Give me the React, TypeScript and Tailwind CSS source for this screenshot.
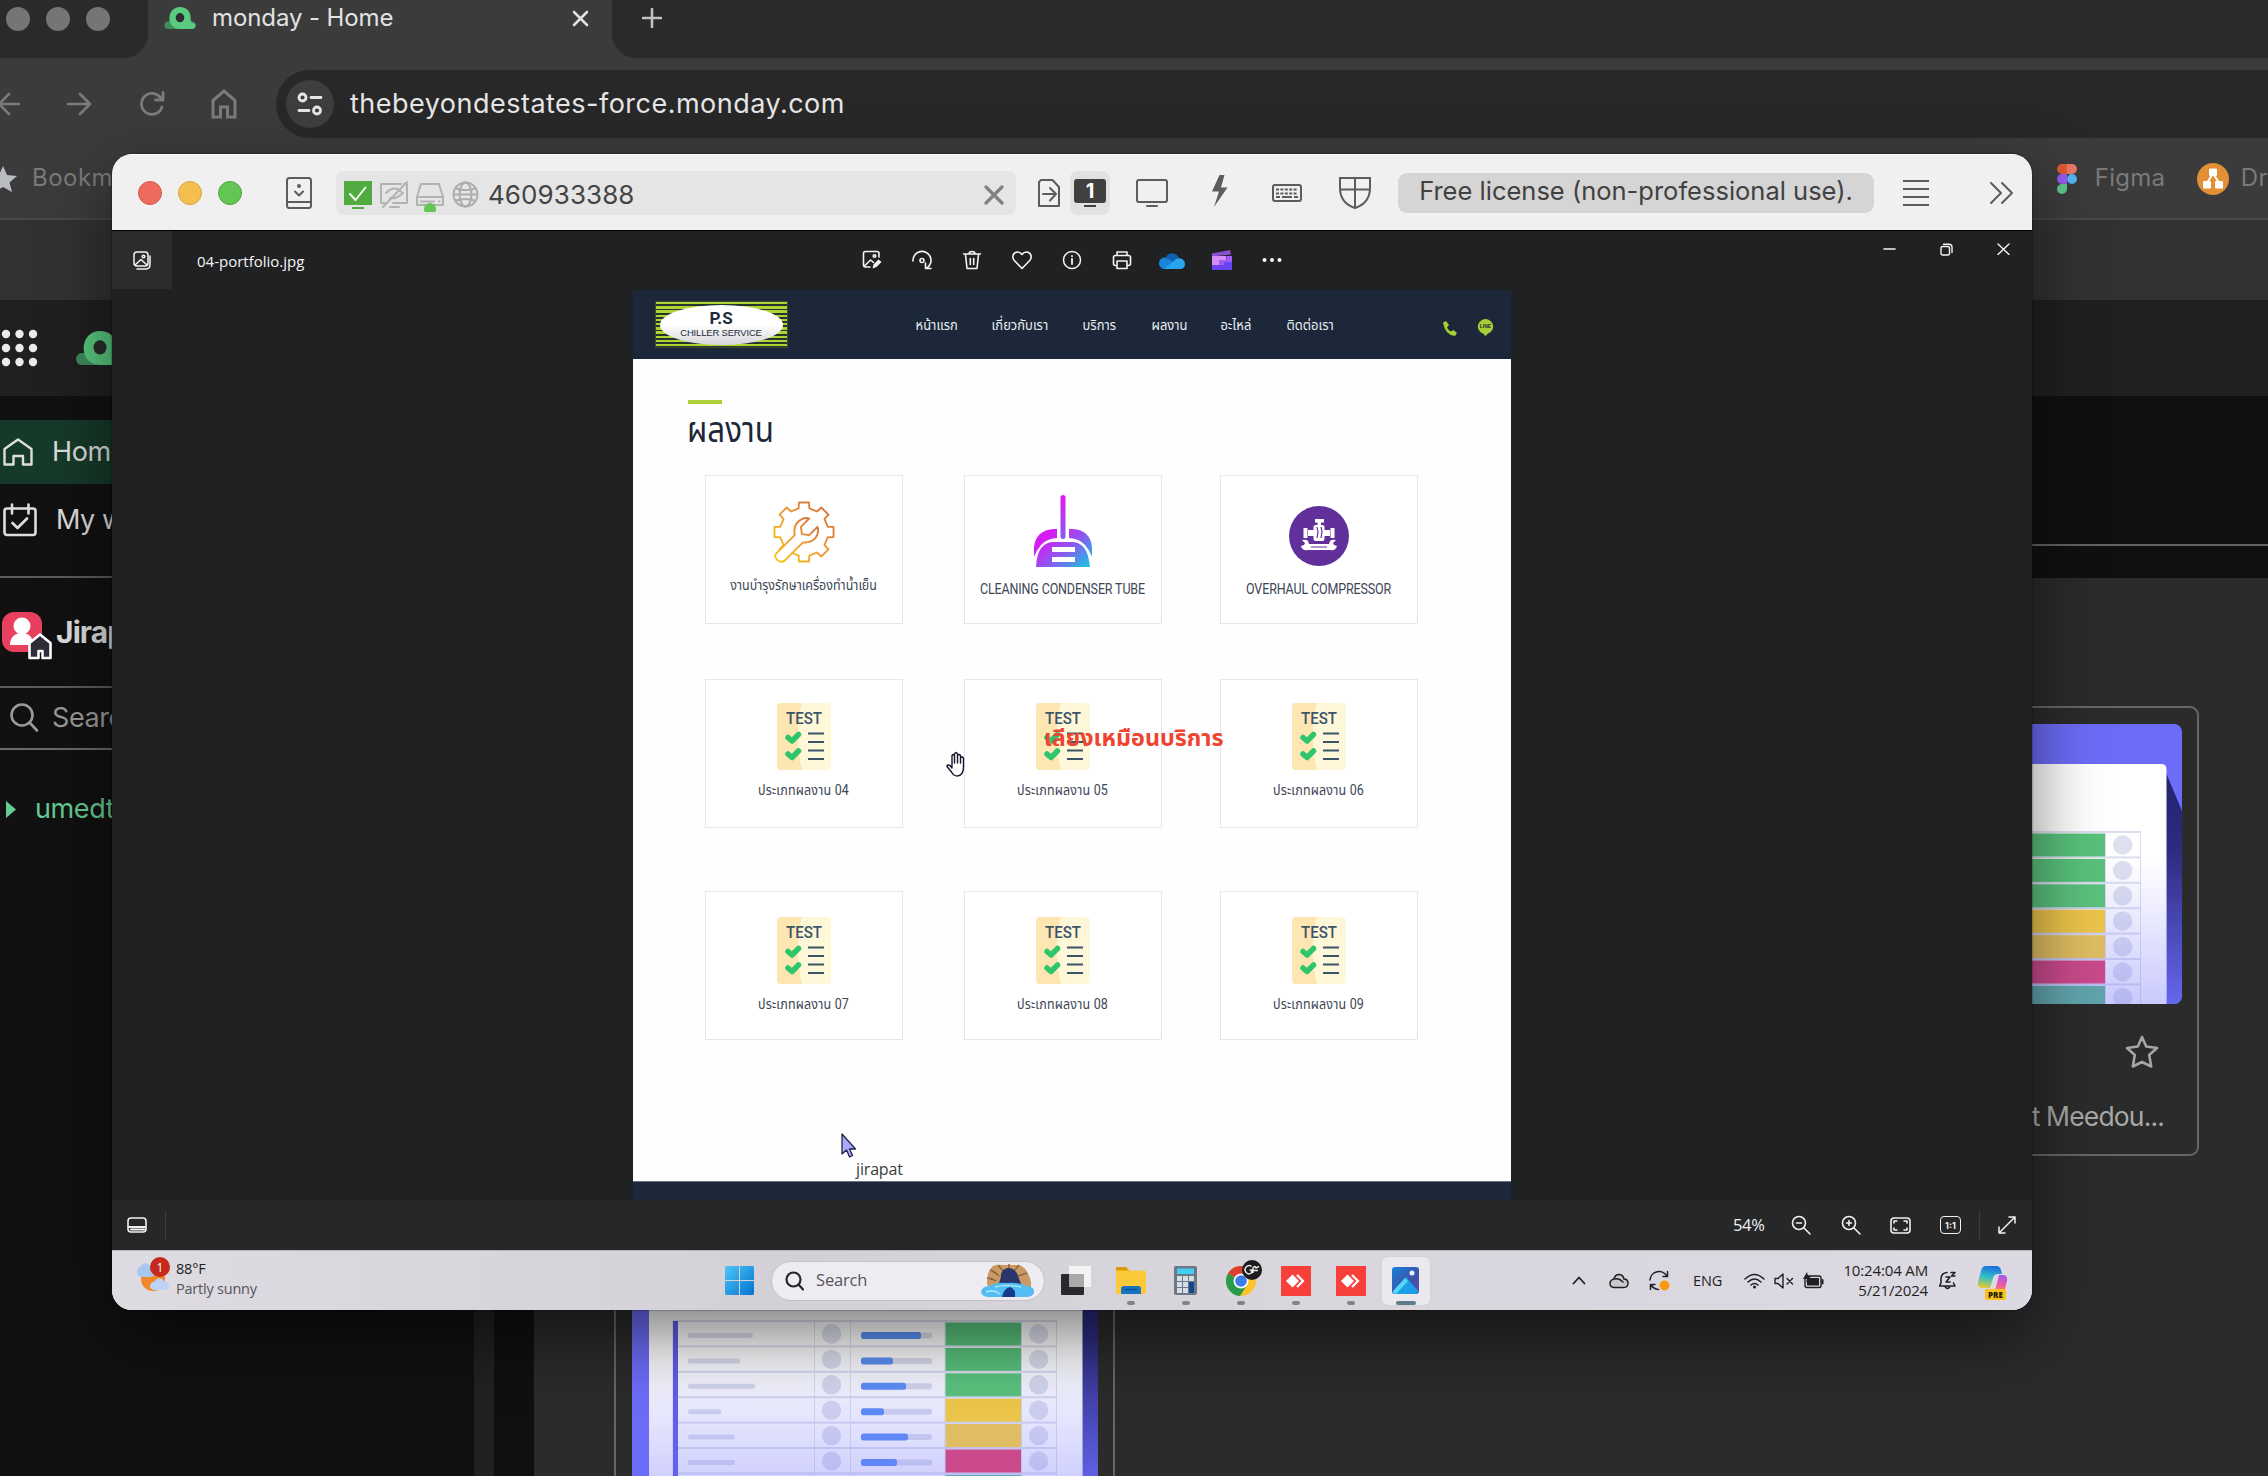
import React from "react";
import type { ReactNode } from "react";

type IconProps = { w: number; h: number; vb?: string; className?: string; sw?: number; children: ReactNode };

function Icon({ w, h, vb, className = "", sw = 2, children }: IconProps) {
  return (
    <svg
      width={w}
      height={h}
      viewBox={vb ?? `0 0 ${w} ${h}`}
      fill="none"
      stroke="currentColor"
      strokeWidth={sw}
      strokeLinecap="round"
      strokeLinejoin="round"
      className={`shrink-0 ${className}`}
    >
      {children}
    </svg>
  );
}

/* ---------- Browser behind the remote window ---------- */

function MondayMark({ w, h }: { w: number; h: number }) {
  return (
    <Icon w={w} h={h} vb="0 0 44 31" className="overflow-visible">
      <rect x="0" y="20" width="44" height="11" rx="5.5" fill="#3f8b5b" stroke="none" />
      <path
        d="M22 0C13 0 7 7 7 16c0 9 6 15 15 15h17c4 0 5-3 5-5.500 0-2-2-3-5-3C37 20 37 18 37 15 37 6 31 0 22 0Z"
        fill="#59ca7f"
        stroke="none"
      />
      <ellipse cx="22" cy="15" rx="6" ry="6.500" fill="#2c2c2c" stroke="none" />
    </Icon>
  );
}

function TabStrip() {
  return (
    <div className="flex h-[58px] bg-[#2a2a2a]">
      <div className="w-[148px] bg-[#3b3b3b]">
        <div className="flex h-[58px] gap-4 rounded-br-[24px] bg-[#2a2a2a] pl-[6px] pt-[7px]">
          <div className="size-6 rounded-full bg-[#757575]" />
          <div className="size-6 rounded-full bg-[#757575]" />
          <div className="size-6 rounded-full bg-[#757575]" />
        </div>
      </div>
      <div className="flex h-[58px] w-[464px] items-center bg-[#3b3b3b] pb-[22px] pl-[16px]">
        <MondayMark w={32} h={22} />
        <span className="ml-[16px] w-[360px] text-[24px] tracking-[-0.004em] text-[#e2e2e2]">monday - Home</span>
        <Icon w={17} h={17} sw={2.6} className="text-[#e0e0e0]">
          <path d="M2 2l13 13M15 2L2 15" />
        </Icon>
      </div>
      <div className="flex-1 bg-[#3b3b3b]">
        <div className="h-[58px] rounded-bl-[24px] bg-[#2a2a2a] pl-[30px] pt-[8px]">
          <Icon w={20} h={20} sw={2.6} className="text-[#c2c2c2]">
            <path d="M10 1v18M1 10h18" />
          </Icon>
        </div>
      </div>
    </div>
  );
}

function AddressRow() {
  return (
    <div className="flex h-[92px] items-center bg-[#3b3b3b] text-[#7b7b7b]">
      <Icon w={22} h={24} sw={2.6} className="-ml-[2px]">
        <path d="M21 12H1M11 2L1 12l10 10" />
      </Icon>
      <Icon w={25} h={24} sw={2.6} className="ml-[47px]">
        <path d="M1 12h22M13 2l10 10-10 10" />
      </Icon>
      <Icon w={26} h={26} sw={2.8} className="ml-[47px]">
        <path d="M23 16a10.500 10.500 0 1 1-2.500-10.500L24 9M24 1.500V9h-7.500" />
      </Icon>
      <Icon w={26} h={30} sw={3} className="ml-[46px]">
        <path strokeLinejoin="miter" d="M2 11.500L13 2l11 9.500V28h-7.500V18h-7v10H2z" />
      </Icon>
      <div className="ml-[39px] flex h-[68px] flex-1 items-center rounded-l-full bg-[#282828] pl-[10px]">
        <div className="flex size-12 items-center justify-center rounded-full bg-[#3e3e3e] text-[#e6e6e6]">
          <Icon w={26} h={24} sw={2.8}>
            <circle cx="5.500" cy="5.500" r="3.500" />
            <path d="M14 5.500h10M2 18.500h10" />
            <circle cx="20" cy="18.500" r="3.500" />
          </Icon>
        </div>
        <span className="ml-[16px] text-[27px] tracking-[0.018em] text-[#e6e6e6]">thebeyondestates-force.monday.com</span>
      </div>
    </div>
  );
}

function BookmarksRow() {
  return (
    <div className="flex h-[70px] items-center border-b-2 border-[#474747] bg-[#3b3b3b] pb-[25px] text-[24px] tracking-[0.02em] text-[#7a7a7a]">
      <Icon w={28} h={26} vb="0 0 28 26" className="-ml-[11px] mt-[14px]">
        <path d="M14 0l4 9 10 1-7.500 6.500L23 26l-9-5-9 5 2.500-9.500L0 10l10-1z" fill="#b9bdc2" stroke="none" />
      </Icon>
      <span className="ml-[15px] mt-[12px] w-[2027px]">Bookmarks</span>
      <Icon w={20} h={30} className="mt-[14px]">
        <g stroke="none">
          <path d="M10 0H5a5 5 0 0 0 0 10h5z" fill="#dc5932" />
          <path d="M10 0h5a5 5 0 0 1 0 10h-5z" fill="#e97766" />
          <path d="M10 10H5a5 5 0 0 0 0 10h5z" fill="#925af0" />
          <circle cx="15" cy="15" r="5" fill="#53b3f2" />
          <path d="M10 20H5a5 5 0 1 0 5 5z" fill="#5cc585" />
        </g>
      </Icon>
      <span className="ml-[18px] mt-[12px] w-[102px] tracking-[0.01em]">Figma</span>
      <Icon w={32} h={32} className="mt-[14px]">
        <circle cx="16" cy="16" r="16" fill="#e28f35" stroke="none" />
        <g fill="#fff" stroke="none">
          <rect x="12" y="5.500" width="8" height="7.500" rx="1" />
          <rect x="6" y="18" width="8" height="7.500" rx="1" />
          <rect x="18" y="18" width="8" height="7.500" rx="1" />
        </g>
        <path d="M15 12l-4.500 7M17 12l4.500 7" stroke="#fff" />
      </Icon>
      <span className="ml-[12px] mt-[12px]">Dr</span>
    </div>
  );
}

function Sidebar() {
  return (
    <div className="w-[474px] bg-[#111111] pt-6 text-[27px] tracking-[-0.015em] text-[#dedede]">
      <div className="flex h-16 items-center bg-[#163a2a] pl-[3px]">
        <Icon w={30} h={28} sw={2.4}>
          <path d="M1.500 11L15 1.500 28.500 11v15.500H20V18h-9.500v8.500h-9z" />
        </Icon>
        <span className="ml-[19px]">Home</span>
      </div>
      <div className="flex h-[72px] items-center pl-[3px]">
        <Icon w={34} h={34} sw={2.6}>
          <rect x="1.500" y="5.500" width="31" height="26.500" rx="2.500" />
          <path d="M9 1.500v9M25.500 1.500v9M9.500 20l5 5L24 15.500" />
        </Icon>
        <span className="ml-[19px]">My work</span>
      </div>
      <div className="mt-5 flex h-[112px] items-center border-y-2 border-[#5c5c5c]">
        <div className="relative ml-[2px] size-10 rounded-xl bg-[#e8415f]">
          <Icon w={50} h={48} className="absolute left-0 top-0 overflow-visible">
            <g fill="#fff" stroke="none">
              <circle cx="20" cy="14" r="8.500" />
              <path d="M8 33c0-8 5-12 12-12s11 4 11 12z" />
            </g>
            <path d="M27.500 31L38 22.500l10.500 8.500v15h-8v-7h-4v7h-9z" fill="#2e2f38" stroke="#fff" strokeWidth="2.600" />
          </Icon>
        </div>
        <span className="ml-[14px] text-[30px] font-bold tracking-[-0.03em]">Jirapat</span>
      </div>
      <div className="flex h-[62px] items-center border-b-2 border-[#6a6a6a] pl-[10px] text-[#9b9b9b]">
        <Icon w={29} h={30} sw={2.6}>
          <circle cx="12" cy="12" r="10.500" />
          <path d="M20 20l7 7.500" />
        </Icon>
        <span className="ml-[13px]">Search</span>
      </div>
      <div className="mt-[27px] flex h-16 items-center pl-[6px] text-[#66cd92]">
        <Icon w={10} h={17}>
          <path d="M0 0l10 8.500L0 17z" fill="#66cd92" stroke="none" />
        </Icon>
        <span className="ml-[19px]">umedthai</span>
      </div>
    </div>
  );
}

const boardRows = [
  { name: 65, fill: 60, color: "#59c27c" },
  { name: 52, fill: 32, color: "#59c27c" },
  { name: 67, fill: 45, color: "#5ac27e" },
  { name: 33, fill: 23, color: "#ecc54b" },
  { name: 47, fill: 47, color: "#e0bd62" },
  { name: 47, fill: 36, color: "#cb4a8c" },
  { name: 50, fill: 40, color: "#62a5ad" },
];

function BoardThumb({ id }: { id: string }) {
  return (
    <svg width="466" height="280" viewBox="0 0 466 280" className="shrink-0 rounded-[8px]">
      <defs>
        <linearGradient id={`fade-${id}`} x1="0" y1="0" x2="0" y2="1">
          <stop offset="0.4" stopColor="#6c6cfa" stopOpacity="0" />
          <stop offset="1" stopColor="#6c6cfa" stopOpacity="0.36" />
        </linearGradient>
        <linearGradient id={`side-${id}`} x1="0" y1="0" x2="0" y2="1">
          <stop offset="0" stopColor="#22226e" />
          <stop offset="0.350" stopColor="#2c2c80" />
          <stop offset="1" stopColor="#6666ee" />
        </linearGradient>
      </defs>
      <rect width="466" height="280" fill="#6d6cf8" />
      <path d="M448 44l18 43v193h-18z" fill={`url(#side-${id})`} />
      <path d="M17 280V44q0-4 4-4h425q4.500 0 4.500 6v234z" fill="#fff" />
      <rect x="41" y="107.500" width="383.500" height="173" fill="none" stroke="#dcdff0" />
      {boardRows.map((r, i) => {
        const y = 108 + i * 25.4;
        return (
          <g key={i}>
            <rect x="41" y={y - 1} width="383" height="2" fill="#dcdfef" />
            <rect x="56" y={y + 12} width={r.name} height="5" rx="2" fill="#dcdfee" />
            <circle cx="199.500" cy={y + 13} r="9.700" fill="#dde0ee" />
            <rect x="229" y={y + 11.5} width="71" height="6" rx="2.500" fill="#dadeec" />
            <rect x="229" y={y + 11} width={r.fill} height="7" rx="2.500" fill="#5c90f4" />
            <circle cx="406.700" cy={y + 13} r="9.700" fill="#dde0ee" />
          </g>
        );
      })}
      <path d="M182.500 108v172M218.500 108v172M313 108v172M389.500 108v172" stroke="#dfe2f0" />
      <rect x="41" y="108" width="5" height="172" fill="#5f5ce8" />
      <rect x="17" y="40" width="433.500" height="240" fill={`url(#fade-${id})`} />
      {boardRows.map((r, i) => (
        <rect key={i} x="313.500" y={109.5 + i * 25.4} width="75.500" height="23" fill={r.color} />
      ))}
    </svg>
  );
}

function BoardCard({ id, name }: { id: string; name?: string }) {
  return (
    <div className="flex h-[450px] w-[501px] flex-col items-center rounded-[9px] border-2 border-[#666666] pt-4">
      <BoardThumb id={id} />
      <div className="flex w-full justify-end pr-[38px] pt-[31px]">
        <Icon w={34} h={34} sw={2.6} className="text-[#a6a6a6]">
          <path d="M17 2l4.200 9.500L32 13l-7.800 7 2 11.500L17 27l-9.200 4.500 2-11.500L2 13l10.800-1.500z" />
        </Icon>
      </div>
      {name && (
        <div className="mt-[30px] w-full pr-[33px] text-right text-[26.500px] leading-[34px] tracking-[-0.032em] text-[#a9a9a9]">{name}</div>
      )}
    </div>
  );
}

function Browser() {
  return (
    <div className="flex h-[1476px] w-[2268px] flex-col">
      <TabStrip />
      <AddressRow />
      <BookmarksRow />
      <div className="h-20 bg-[#323232]" />
      <div className="flex h-24 items-center bg-[#202020] pl-[1px]">
        <Icon w={38} h={38}>
          <g fill="#ebebeb" stroke="none">
            {[5, 19, 33].map((y) => [5, 18.5, 32].map((x) => <circle key={`${x}-${y}`} cx={x} cy={y} r="4.200" />))}
          </g>
        </Icon>
        <div className="ml-[37px]">
          <MondayMark w={48} h={34} />
        </div>
      </div>
      <div className="flex flex-1 overflow-hidden">
        <Sidebar />
        <div className="w-5 bg-[#212121]" />
        <div className="flex-1 bg-[#101010]">
          <div className="h-[148px]" />
          <div className="h-[2px] bg-[#636363]" />
          <div className="h-8" />
          <div className="ml-10 grid h-[898px] grid-cols-[501px_501px_501px] content-start gap-x-[41px] gap-y-[39px] bg-[#2b2b2b] pl-[80px] pt-[128px]">
            <BoardCard id="a" />
            <BoardCard id="b" />
            <BoardCard id="c" name="Jirapat Meedou..." />
            <BoardCard id="d" />
          </div>
        </div>
      </div>
    </div>
  );
}

/* ---------- Remote desktop window ---------- */

function RemoteBar() {
  return (
    <div className="flex h-[76px] items-center border-t border-white bg-[#f0f0f0] pl-[26px] text-[#5c5c5c]">
      <div className="flex gap-4">
        <div className="size-6 rounded-full border border-[#d9564c] bg-[#ee6a5f]" />
        <div className="size-6 rounded-full border border-[#dba43a] bg-[#f5bf4f]" />
        <div className="size-6 rounded-full border border-[#51a73d] bg-[#62c554]" />
      </div>
      <Icon w={26} h={32} className="ml-[44px]">
        <rect x="1" y="1" width="24" height="30" rx="2.500" />
        <path d="M1 25h24M9 14.500l4 4 4-4" />
        <circle cx="13" cy="9" r="2" fill="currentColor" stroke="none" />
      </Icon>
      <div className="ml-[24px] flex h-11 w-[680px] items-center rounded-[8px] bg-[#e5e5e5] pl-2">
        <Icon w={28} h={28} className="mt-1">
          <rect width="28" height="24" fill="#52ab41" stroke="none" />
          <path d="M6 13l5.500 6L21.500 6.500" stroke="#f2fff0" strokeWidth="2" />
          <path d="M8 27h12" stroke="#52ab41" strokeLinecap="butt" />
        </Icon>
        <Icon w={28} h={28} className="ml-2 mt-1 text-[#b3b3b3]">
          <path d="M24 3h3v19h-14M5 22H1V3h20M10 26h9M3 26L27 1" />
          <path d="M6 12c5-5 8-5 12-4M10 17c5 1 9-1 13-5M20 10l3 2" />
        </Icon>
        <Icon w={28} h={29} className="ml-2 mt-[9px] text-[#b3b3b3]">
          <path d="M5 1h18l4 13v8H1v-8zM1 14h26M5 18.500h13M23 18.500h.5" />
          <circle cx="14" cy="26" r="6" fill="#62c554" stroke="none" />
        </Icon>
        <Icon w={27} h={27} className="ml-2 mt-[3px] text-[#adadad]">
          <circle cx="13.500" cy="13.500" r="12" />
          <ellipse cx="13.500" cy="13.500" rx="6" ry="12" />
          <path d="M2 13.500h23M4 7.500c6 2 13 2 19 0M4 19.500c6-2 13-2 19 0" />
        </Icon>
        <span className="ml-[9px] mt-[4px] w-[496px] text-[26px] tracking-[0.003em] text-[#444444]">460933388</span>
        <Icon w={20} h={20} sw={3.2} className="mt-1 text-[#808080]">
          <path d="M2 2l16 16M18 2L2 18" />
        </Icon>
      </div>
      <Icon w={22} h={28} className="ml-[22px]">
        <path d="M3 1h11.500L21 8v19H1V3zM5 15h12M12 9l6 6-6 6.500" />
      </Icon>
      <div className="ml-[10px] flex h-11 w-10 items-center justify-center rounded-[8px] bg-[#e2e2e2]">
        <div className="flex w-8 flex-col items-center gap-[2px]">
          <div className="flex h-6 w-8 items-center justify-center rounded-[3px] bg-[#404040] text-[20px] font-bold text-white">1</div>
          <div className="h-[2px] w-3 bg-[#404040]" />
        </div>
      </div>
      <Icon w={32} h={28} className="ml-[26px]">
        <rect x="1" y="1" width="30" height="22" rx="2" />
        <path d="M11 27h10" />
      </Icon>
      <Icon w={18} h={32} className="ml-[43px] mt-[-3px]">
        <path d="M8.500 0h5L10 12.500h6.500L3 32l5-15.500H1z" fill="currentColor" stroke="none" />
        <path d="M3.500 14.500L9 2.500" stroke="none" />
      </Icon>
      <Icon w={30} h={18} className="ml-[43px]">
        <rect x="1" y="1" width="28" height="16" rx="2" />
        <path d="M4 5.500h22M4 9.500h22" strokeDasharray="3 1.400" strokeLinecap="butt" />
        <path d="M4 13h4M10 13h10M22 13h4" strokeLinecap="butt" />
      </Icon>
      <Icon w={32} h={32} className="ml-[37px]">
        <path strokeLinejoin="miter" d="M1 1h30v10c0 11-6 17-15 20C7 28 1 22 1 11zM16 1v30M1 12.500h30" />
      </Icon>
      <div className="ml-[27px] flex h-10 w-[476px] items-center justify-center rounded-[9px] bg-[#d5d5d5] text-[25.500px] text-[#414141]">
        <span className="-mt-[2px] whitespace-nowrap">Free license (non-professional use).</span>
      </div>
      <Icon w={28} h={26} className="ml-[28px]">
        <path d="M1 1h26M1 9h26M1 17h26M1 25h26" strokeLinecap="butt" />
      </Icon>
      <Icon w={26} h={24} className="ml-[59px]">
        <path d="M2 2l10 10L2 22M13 2l10 10-10 10" />
      </Icon>
    </div>
  );
}

function PhotosHeader() {
  return (
    <div className="flex h-[59px] text-[#f4f4f4]">
      <div className="flex h-[58px] w-[60px] items-center justify-center bg-[#2b2c2e]">
        <Icon w={18} h={19} sw={1.5}>
          <rect x="1" y="1" width="14" height="14" rx="3" />
          <path d="M4 18h9a4.500 4.500 0 0 0 4-4.500V5M2 14l6-5.500 6 5.500" />
          <circle cx="10.500" cy="5.500" r="1.300" />
        </Icon>
      </div>
      <span className="flex h-[60px] w-[650px] items-center pl-[25px] font-['Open_Sans'] text-[15px] tracking-[0em]">04-portfolio.jpg</span>
      <div className="grid h-[58px] grid-cols-[repeat(9,50px)] items-center justify-items-center pl-[25px]">
        <Icon w={20} h={20} sw={1.6}>
          <path d="M17 7V3.500Q17 1.500 15 1.500H3.500Q1.500 1.500 1.500 3.500V15q0 2 2 2H8M2.500 16l6-6 3 2.500" />
          <circle cx="12.500" cy="6" r="1.300" />
          <path d="M10.500 18.500l1-4 5-5 3 2.500-5 5z" fill="currentColor" stroke="none" />
        </Icon>
        <Icon w={20} h={20} sw={1.6}>
          <path d="M1 11A9 9 0 1 1 14.500 18.200M13.500 13v5.500H19" />
          <circle cx="10" cy="10.500" r="2" />
        </Icon>
        <Icon w={20} h={20} sw={1.6}>
          <path d="M1.500 4h17M7 4q0-2.500 3-2.500T13 4M3.500 4.500l1.500 14h10l1.500-14M8.300 8.500v6M11.700 8.500v6" />
        </Icon>
        <Icon w={20} h={20} sw={1.6}>
          <path d="M10 18.500L2.300 10.500C-.5 7.500 1 2 5.500 2 8 2 9.300 3.500 10 4.500 10.700 3.500 12 2 14.500 2 19 2 20.500 7.500 17.700 10.500z" />
        </Icon>
        <Icon w={20} h={20} sw={1.5}>
          <circle cx="10" cy="10" r="8.500" />
          <path d="M10 9v5M10 6v.2" strokeWidth="1.800" />
        </Icon>
        <Icon w={20} h={20} sw={1.6}>
          <path d="M5 5.500V2h10v3.500M5 15.500H3.500q-2 0-2-2V7.500q0-2 2-2h13q2 0 2 2v6q0 2-2 2H15M5 11h10v7.500H5z" />
        </Icon>
        <Icon w={26} h={17} vb="0 0 26 17">
          <g stroke="none">
            <path d="M6 7C8 0 17-1 20 6l-6 5z" fill="#0f5fb4" />
            <path d="M6 5.500C2 5.500 0 8 0 11.500 0 15 3 17 6 17l10-6z" fill="#1785d8" />
            <path d="M5 17l11-9c4-4 10-1 10 4 0 3-2 5-5 5z" fill="#29a5ee" />
          </g>
        </Icon>
        <Icon w={20} h={20}>
          <g stroke="none">
            <path d="M0 3.500L18 0l1 4.500-19 2z" fill="#8a4fd0" />
            <rect y="6" width="20" height="14" rx="1" fill="#6a43f2" />
            <path d="M0 6h14v4H7v5H0z" fill="#d68bf7" />
            <path d="M7 10h8V6h5v6h-8v3H7z" fill="#a15bf5" />
          </g>
        </Icon>
        <Icon w={20} h={6}>
          <g fill="currentColor" stroke="none">
            <circle cx="2.500" cy="3" r="2" />
            <circle cx="10" cy="3" r="2" />
            <circle cx="17.500" cy="3" r="2" />
          </g>
        </Icon>
      </div>
      <div className="ml-[586px] flex h-9 items-center gap-[44px]">
        <Icon w={13} h={12} sw={1.5}>
          <path d="M1 6h11" />
        </Icon>
        <Icon w={13} h={13} sw={1.4}>
          <rect x="1" y="3.500" width="8.500" height="8.500" rx="1.500" />
          <path d="M3.500 1.300H9q3 0 3 3v5.200" />
        </Icon>
        <Icon w={13} h={12} sw={1.4}>
          <path d="M1 1l11 10.500M12 1L1 11.500" />
        </Icon>
      </div>
    </div>
  );
}

const thai = "font-['Roboto','Noto_Sans_Thai','Loma',sans-serif]";

function SiteHeader() {
  return (
    <div className={`flex h-[69px] items-center bg-[#1c2839] pl-[22px] text-[13px] text-[#e9edf2] ${thai}`}>
      <div className="flex h-[47px] w-[133px] items-center justify-center border border-[#3b4c2c] bg-[repeating-linear-gradient(180deg,#b1d334_0px,#b1d334_2.500px,#24352f_2.500px,#24352f_4.200px)]">
        <div className="flex h-[40px] w-[123px] flex-col items-center justify-center rounded-[50%] bg-gradient-to-b from-white via-white to-[#d5d5d9] text-[#1f2a3c]">
          <span className="text-[17px] font-bold leading-[15px]">P.S</span>
          <span className="mt-[1px] font-['Liberation_Sans'] text-[9.500px] leading-[11px] tracking-[-0.02em]">CHILLER SERVICE</span>
        </div>
      </div>
      <nav className="ml-[128px] mt-[2px] grid w-[523px] scale-y-110 grid-cols-[76px_91px_69px_69px_66px_152px] whitespace-nowrap">
        <span>หน้าแรก</span>
        <span>เกี่ยวกับเรา</span>
        <span>บริการ</span>
        <span>ผลงาน</span>
        <span>อะไหล่</span>
        <span>ติดต่อเรา</span>
      </nav>
      <Icon w={15} h={15} className="ml-[3px] mt-[7px]">
        <path d="M1 1.500L4 0l3 4-2 2.500q1 2.500 4 4L11.500 9 15 12l-2 3Q3 14 1 1.500z" fill="#a5cf35" stroke="none" />
      </Icon>
      <svg width="17" height="17" viewBox="0 0 17 17" className="ml-[20px] mt-[6px] shrink-0">
        <path d="M8.500 0A8 7.500 0 0 0 6 14.500L8.500 17 11 14.500A8 7.500 0 0 0 8.500 0z" fill="#a5cf35" />
        <text x="8.500" y="9.300" textAnchor="middle" fontSize="5" fontWeight="700" fontFamily="Liberation Sans, sans-serif" fill="#1c2839">LINE</text>
      </svg>
    </div>
  );
}

function GearWrench() {
  const teeth = Array.from({ length: 8 }, (_, i) => {
    const a = (i * Math.PI) / 4;
    const p = (r: number, o: number) => `${30 + r * Math.sin(a + o)} ${30 - r * Math.cos(a + o)}`;
    return `${i ? "L" : "M"}${p(23.5, -0.22)}L${p(29, -0.17)}L${p(29, 0.17)}L${p(23.5, 0.22)}`;
  }).join("");
  return (
    <svg width="62" height="62" viewBox="0 0 60 60">
      <defs>
        <linearGradient id="gear" x1="1" y1="0" x2="0" y2="1">
          <stop offset="0" stopColor="#d4673a" />
          <stop offset="0.500" stopColor="#ee9a35" />
          <stop offset="1" stopColor="#f6c70b" />
        </linearGradient>
      </defs>
      <g fill="none" stroke="url(#gear)" strokeWidth="1.800" strokeLinejoin="round">
        <path d={teeth + "Z"} />
        <path
          d="M3 51l18-18q-2-12 8-16 3-1 6 0l-8 8 1 7 7 1 8-8q2 6-2 11-5 5-12 4L11 58q-4 2-7-1-3-3-1-6z"
          fill="#fff"
        />
      </g>
    </svg>
  );
}

function Dustpan() {
  return (
    <svg width="58" height="73" viewBox="0 0 58 73">
      <defs>
        <linearGradient id="pan" x1="0" y1="0.200" x2="1" y2="1">
          <stop offset="0.150" stopColor="#d61cf5" />
          <stop offset="0.550" stopColor="#8260ee" />
          <stop offset="1" stopColor="#0fd0e0" />
        </linearGradient>
        <linearGradient id="stick" x1="0" y1="0" x2="0" y2="1">
          <stop offset="0" stopColor="#e516ee" />
          <stop offset="1" stopColor="#8a5cf0" />
        </linearGradient>
      </defs>
      <rect x="26.500" y="0" width="5" height="44" rx="2.500" fill="url(#stick)" />
      <path
        fillRule="evenodd"
        fill="url(#pan)"
        d="M0 62V52Q2 35 20 34H23V43Q12 44 7 50 2 56 0 62zM58 62V52Q56 35 39 34H35V43Q46 44 51 50 56 56 58 62zM2 72Q3 48 19 47H39Q54 48 56 72zM18 52v5h23v-5zM18 62v5h23v-5z"
      />
    </svg>
  );
}

function CompressorBadge() {
  return (
    <svg width="60" height="60" viewBox="0 0 60 60">
      <circle cx="30" cy="30" r="30" fill="#62309a" />
      <g fill="#fff">
        <rect x="26" y="13" width="9" height="3.500" />
        <rect x="28.500" y="16" width="3.500" height="4" />
        <rect x="24.500" y="19" width="11" height="16" rx="2" />
        <rect x="14.500" y="22" width="4" height="10" />
        <rect x="41.500" y="22" width="4" height="10" />
        <rect x="19" y="24" width="22" height="6" />
        <path d="M13 34q4-1 6 1l1 3h20l1-3q2-2 6-1l-3 3 1 2 3 1q-1 5-7 4H19q-6 1-7-4l3-1 1-2z" />
      </g>
      <path d="M28 21l1 5-1 6M32 21l1 5-1 6M22 41h16" stroke="#62309a" strokeWidth="1.200" fill="none" />
    </svg>
  );
}

function TestSheet() {
  return (
    <svg width="54" height="67" viewBox="0 0 54 67">
      <rect width="54" height="67" rx="4" fill="#fef8d8" />
      <path d="M4 0h21q-4 10-4 33 0 20 4 34H4q-4 0-4-4V4Q0 0 4 0z" fill="#fde6b2" />
      <text x="9" y="21" fontSize="17" fontWeight="500" fontFamily="Roboto, sans-serif" fill="#3c5468" textLength="36" lengthAdjust="spacingAndGlyphs">
        TEST
      </text>
      <g fill="none" stroke="#2fc56d" strokeWidth="5.500" strokeLinejoin="round" strokeLinecap="round">
        <path d="M11 34.500l4 3.500 6.500-6.500M11 51l4 3.500 6.500-6.500" />
      </g>
      <path d="M31 30.500h16M31 39h16M31 47.500h16M31 56h16" stroke="#3c5468" strokeWidth="1.800" />
    </svg>
  );
}

function WorkCard({ top, gap, label, children }: { top: string; gap: string; label: string; children: ReactNode }) {
  return (
    <div className={`flex h-[149px] w-[198px] flex-col items-center border border-[#e7e7ea] bg-white ${top}`}>
      {children}
      <span className={`scale-y-110 whitespace-nowrap text-[12.500px] leading-5 text-[#3d4655] ${gap}`}>{label}</span>
    </div>
  );
}

function PhotoCanvas() {
  return (
    <div className="flex h-[910px] justify-center">
      <div className="mr-[1px] flex w-[878px] flex-col bg-[#fefefe]">
        <SiteHeader />
        <div className={`flex-1 pl-[55px] pt-[41px] ${thai}`}>
          <div className="h-[4px] w-[34px] bg-[#add038]" />
          <h1 className="-ml-[1px] mt-[6px] origin-left scale-x-[0.98] scale-y-110 text-[32px] leading-[40px] text-[#1c2839]">ผลงาน</h1>
          <div className="ml-[17px] mt-[25px] grid grid-cols-[259px_256px_198px]">
            <WorkCard top="pt-[25px]" gap="mt-[13px]" label="งานบำรุงรักษาเครื่องทำน้ำเย็น">
              <GearWrench />
            </WorkCard>
            <WorkCard top="pt-[19px]" gap="mt-[12px] tracking-[-0.012em]" label="CLEANING CONDENSER TUBE">
              <Dustpan />
            </WorkCard>
            <WorkCard top="pt-[30px]" gap="mt-[14px] tracking-[-0.012em]" label="OVERHAUL COMPRESSOR">
              <CompressorBadge />
            </WorkCard>
          </div>
          <div className="ml-[17px] mt-[55px] grid grid-cols-[259px_256px_198px]">
            {["04", "05", "06"].map((n) => (
              <WorkCard key={n} top="pt-[23px]" gap="mt-[11px] tracking-[0.015em]" label={`ประเภทผลงาน ${n}`}>
                <TestSheet />
              </WorkCard>
            ))}
          </div>
          <div className="ml-[17px] mt-[63px] grid grid-cols-[259px_256px_198px]">
            {["07", "08", "09"].map((n) => (
              <WorkCard key={n} top="pt-[25px]" gap="mt-[11px] tracking-[0.015em]" label={`ประเภทผลงาน ${n}`}>
                <TestSheet />
              </WorkCard>
            ))}
          </div>
        </div>
        <div className="h-[19px] border-t border-[#66727d] bg-[#1c2839]" />
      </div>
    </div>
  );
}

function PhotosFooter() {
  return (
    <div className="flex h-[50px] items-center bg-[#262729] text-[#f1f1f1]">
      <Icon w={20} h={16} sw={1.6} className="ml-[15px]">
        <rect x="1" y="1" width="18" height="14" rx="3" />
        <path d="M1.500 10h17M4 12.500h13" strokeDasharray="2.500 1" strokeWidth="2" />
      </Icon>
      <div className="ml-[18px] h-[29px] w-px bg-[#3a3b3d]" />
      <span className="ml-[1567px] w-[58px] font-['Open_Sans'] text-[16.500px] tracking-[-0.02em]">54%</span>
      <Icon w={20} h={20} sw={1.6}>
        <circle cx="8" cy="8" r="6.500" />
        <path d="M13 13l6 6M5.500 8h5" />
      </Icon>
      <Icon w={20} h={20} sw={1.6} className="ml-[30px]">
        <circle cx="8" cy="8" r="6.500" />
        <path d="M13 13l6 6M5.500 8h5M8 5.500v5" />
      </Icon>
      <Icon w={21} h={17} sw={1.6} className="ml-[29px]">
        <rect x="1" y="1" width="19" height="15" rx="3" />
        <path d="M4 6V4h3M14 4h3v2M4 11v2h3M14 13h3v-2" />
      </Icon>
      <div className="ml-[29px] flex h-[18px] w-[21px] items-center justify-center rounded-[4px] border-[1.5px] border-[#f1f1f1] text-[9px] font-bold leading-none">1:1</div>
      <div className="ml-[18px] h-[29px] w-px bg-[#3a3b3d]" />
      <Icon w={18} h={18} sw={1.5} className="ml-[18px]">
        <path d="M11 1h6v6M17 1L1 17M1 11v6h6" />
      </Icon>
    </div>
  );
}

function AppSlot({ active, dot = true, children }: { active?: boolean; dot?: boolean; children: ReactNode }) {
  return (
    <div className="flex w-[55px] justify-center">
      <div className={`flex h-[48px] w-[48px] flex-col items-center rounded-[5px] pt-[9px] ${active ? "bg-[#ebe9ee] shadow-[0_0_1px_#aaa]" : ""}`}>
        <div className="flex h-[30px] items-center">{children}</div>
        {dot && <div className={`mt-[5px] h-1 rounded-full ${active ? "w-5 bg-[#5d7c8c]" : "w-2 bg-[#86828a]"}`} />}
      </div>
    </div>
  );
}

function RemoteClientIcon() {
  return (
    <div className="flex h-[30px] w-[30px] items-center justify-center bg-[#f8403a]">
      <svg width="19" height="14" viewBox="0 0 19 14">
        <path d="M6.500 0.500L13 7l-6.500 6.500L0 7z" fill="#fff" />
        <path d="M11 1l6 6-6 6" stroke="#fff" strokeWidth="2.200" fill="none" />
      </svg>
    </div>
  );
}

function Taskbar() {
  return (
    <div className="flex h-[60px] items-center border-t border-[#b9b7bd] bg-[#dcd9e0] bg-[linear-gradient(90deg,#dedbe2,#d3d0d7_35%,#d8d5dd_60%,#dcd9e2)] font-['Open_Sans'] text-[#1f1f24]">
      <svg width="34" height="36" viewBox="0 0 34 36" className="ml-[24px] mt-[-11px] shrink-0">
        <circle cx="17" cy="22" r="12" fill="#f0872a" />
        <path d="M5 9a5 5 0 0 1 9 0q5 1 5 6t-5 5H5q-4-1-4-5t4-6z" fill="#a9c6ef" />
        <path d="M19 24a5 5 0 0 1 9 0q5 1 5 6-1 3-4 3H18q-4-1-4-4t5-5z" fill="#bcd3f5" />
        <circle cx="24" cy="10" r="10" fill="#c42b1c" />
        <text x="24" y="14.500" fontSize="12" fill="#fff" textAnchor="middle" fontFamily="Open Sans, sans-serif">1</text>
      </svg>
      <div className="ml-[6px] mt-[-3px] w-[549px] text-[14.500px] leading-[20px] tracking-[-0.015em]">
        <div>88°F</div>
        <div className="text-[#55555c]">Partly sunny</div>
      </div>
      <svg width="29" height="29" viewBox="0 0 29 29" className="shrink-0">
        <defs>
          <linearGradient id="win" x1="0" y1="0" x2="1" y2="1">
            <stop offset="0" stopColor="#4cc6f8" />
            <stop offset="1" stopColor="#0473cf" />
          </linearGradient>
        </defs>
        <path d="M1 0h13v14H0V1zM15 0h13l1 1v13H15zM0 15h14v14H1l-1-1zM15 15h14v13l-1 1H15z" fill="url(#win)" />
      </svg>
      <div className="ml-[17px] flex h-[40px] w-[274px] items-center rounded-full border border-[#c3c1c8] bg-[#eeecf1] pl-[13px]">
        <Icon w={19} h={20} sw={2.2} className="text-[#26262a]">
          <circle cx="8.500" cy="8.500" r="7" />
          <path d="M13.500 13.500l4.500 5" />
        </Icon>
        <span className="ml-[12px] w-[165px] text-[16.500px] tracking-[-0.01em] text-[#55555b]">Search</span>
        <svg width="53" height="33" viewBox="0 0 53 33" className="shrink-0">
          <path d="M6 20Q6 6 12 2 16 0 24 1h14q9 3 12 17v6l-4 4H10z" fill="#c99a63" />
          <path d="M6 14q5 0 9 3M9 6q6 2 9 6M17 1l5 6M28 0v6M38 1l-5 6M46 9l-9 3" stroke="#8d6742" strokeWidth="1.500" />
          <path d="M14 23q6-4 6-13 2-6 8-6 7 1 9 8 2 7 6 12z" fill="#29366b" />
          <path d="M0 28q1-6 8-6 8-4 18-3 12-1 20 3 8 1 7 7-2 4-8 4H8q-7 0-8-5z" fill="#53bdf3" />
          <path d="M14 23q12-3 26 0M5 28q8-3 14 2" stroke="#a8e5fb" strokeWidth="1.500" fill="none" />
          <path d="M21 33q2-9 8-10 6 2 5 10z" fill="#173a8d" />
        </svg>
      </div>
      <div className="ml-[3px] flex">
        <AppSlot dot={false}>
          <svg width="30" height="30" viewBox="0 0 30 30">
            <rect x="0" y="8" width="23" height="21" rx="1" fill="#29292b" />
            <rect x="8" y="0" width="22" height="21" rx="1" fill="#f3f3f3" />
            <rect x="8" y="8" width="15" height="13" fill="#a9a9aa" />
          </svg>
        </AppSlot>
        <AppSlot>
          <svg width="30" height="27" viewBox="0 0 30 27">
            <path d="M0 1q0-1 1-1h9l3 3-2 3H0z" fill="#d79a05" />
            <rect y="3.500" width="30" height="23.500" rx="1.500" fill="#fcc93a" />
            <path d="M5 27v-5q0-3 3-3h14q3 0 3 3v5z" fill="#1673c2" />
            <path d="M9 22.500h12" stroke="#0c4f94" strokeWidth="1.500" />
          </svg>
        </AppSlot>
        <AppSlot>
          <svg width="23" height="29" viewBox="0 0 23 29">
            <rect width="23" height="29" rx="2" fill="#6b7885" />
            <rect x="3" y="2.500" width="17" height="5.500" fill="#42cdf2" />
            <g fill="#d6dde3">
              {[10, 16, 22].map((y) => [3, 9, 15].map((x) => <rect key={`${x}-${y}`} x={x} y={y} width="5" height="5" />))}
            </g>
            <rect x="15" y="16" width="5" height="11" fill="#13478e" />
          </svg>
        </AppSlot>
        <AppSlot>
          <div className="relative">
            <svg width="30" height="30" viewBox="0 0 30 30">
              <circle cx="15" cy="15" r="15" fill="#fcc52a" />
              <path d="M15 15L2 7.500A15 15 0 0 1 28 7.500z" fill="#de3f31" />
              <path d="M15 15L2 7.500A15 15 0 0 0 14 30l7-11z" fill="#289b4b" />
              <circle cx="15" cy="15" r="7.500" fill="#fff" />
              <circle cx="15" cy="15" r="5.800" fill="#3b7de8" />
            </svg>
            <svg width="20" height="20" viewBox="0 0 20 20" className="absolute left-[16px] top-[-6px]">
              <circle cx="10" cy="10" r="10" fill="#1c1c1e" />
              <path d="M9.500 6.500A4 4 0 1 0 9.500 13V10H7.500M11 13V8q2-3 3 0l3-1.500M11 10.500h5" stroke="#e9e9e9" strokeWidth="1.500" fill="none" />
            </svg>
          </div>
        </AppSlot>
        <AppSlot>
          <RemoteClientIcon />
        </AppSlot>
        <AppSlot>
          <RemoteClientIcon />
        </AppSlot>
        <AppSlot active>
          <svg width="27" height="27" viewBox="0 0 27 27">
            <defs>
              <linearGradient id="ph" x1="0" y1="0" x2="1" y2="1">
                <stop offset="0" stopColor="#1482d8" />
                <stop offset="0.600" stopColor="#3f52a8" />
                <stop offset="1" stopColor="#5e4fae" />
              </linearGradient>
            </defs>
            <rect width="27" height="27" rx="3" fill="url(#ph)" />
            <path d="M1 25L14 10l12 14q0 3-3 3H4q-3 0-3-2z" fill="#1c9fe6" />
            <path d="M1 24L13 11l3 3-12 13q-3 0-3-3z" fill="#57d7f8" />
            <circle cx="20" cy="6" r="2.500" fill="#e8f1fb" />
          </svg>
        </AppSlot>
      </div>
      <div className="ml-[139px] flex items-center">
        <Icon w={14} h={9} sw={1.8}>
          <path d="M1.500 7.500L7 1.500l5.500 6" />
        </Icon>
        <Icon w={20} h={16} sw={1.5} className="ml-[23px]">
          <path d="M5 14.500q-4-.5-4-4T5 6q1-4.500 5-4.500T15 6q4 0 4 4.500-.5 4-4 4z" fill="#c9c8cc" />
          <path d="M6 6q4-1 8 3" />
        </Icon>
        <Icon w={21} h={21} sw={1.5} className="ml-[20px]">
          <path d="M1 10A9 9 0 0 1 18 6.500M18.500 1.500v5H14M1.500 19.500v-5H6M1.500 14.500q3 4.500 8 5" />
          <circle cx="15.500" cy="15.500" r="5" fill="#fb9a10" stroke="none" />
        </Icon>
        <span className="ml-[23px] w-[51px] text-[14.500px] tracking-[-0.01em]">ENG</span>
        <Icon w={21} h={16} sw={1.5}>
          <path d="M1 6q9.500-9 19 0M4 9q6.500-6 13 0M7 12q3.500-3 7 0" />
          <circle cx="10.500" cy="14" r="1.500" fill="currentColor" stroke="none" />
        </Icon>
        <Icon w={20} h={16} sw={1.4} className="ml-[9px]">
          <path d="M1 5.500h3L9 1v14l-5-4.500H1zM13 5.500l5.500 5.500M18.500 5.500L13 11" />
        </Icon>
        <Icon w={21} h={17} sw={1.4} className="ml-[9px]">
          <rect x="2" y="4" width="16" height="11.500" rx="2" fill="#fff0" />
          <rect x="4" y="6" width="12" height="7.500" fill="currentColor" stroke="none" />
          <path d="M19.500 8v3.500" strokeWidth="2" />
          <path d="M4 0L0 7h4l-1 4 5-7H5z" fill="currentColor" stroke="none" />
        </Icon>
        <div className="ml-[10px] mt-[-2px] w-[94px] whitespace-nowrap text-right text-[15px] leading-[20px] tracking-[-0.01em]">
          <div>10:24:04 AM</div>
          <div>5/21/2024</div>
        </div>
        <Icon w={19} h={19} sw={1.5} className="ml-[10px]">
          <path d="M9 1.500Q3 2 3 8v4l-1.500 3H17L15.500 12M7 15.500q2.500 4 5 0M8 6h4l-4 5h4M13 1.500h4L13.500 5H17" />
        </Icon>
        <div className="relative ml-[21px] mt-[2px] h-[32px] w-[30px]">
          <svg width="30" height="28" viewBox="0 0 30 28">
            <defs>
              <linearGradient id="cpa" x1="0.500" y1="0" x2="0.300" y2="1">
                <stop offset="0" stopColor="#1c6fe0" />
                <stop offset="0.500" stopColor="#2fc0c8" />
                <stop offset="1" stopColor="#e6c92f" />
              </linearGradient>
              <linearGradient id="cpb" x1="0.500" y1="0" x2="0.300" y2="1">
                <stop offset="0" stopColor="#a45df0" />
                <stop offset="0.500" stopColor="#ee56a0" />
                <stop offset="1" stopColor="#f59a44" />
              </linearGradient>
            </defs>
            <path d="M8 0h10q4 0 5 4l1 4h-4q-4 0-5 4l-3 10H4q-5 0-4-6L3 5q1-5 5-5z" fill="url(#cpa)" />
            <path d="M22 27H13q4-2 5-6l3-12h5q4 1 3 6l-2 8q-1 4-5 4z" fill="url(#cpb)" />
          </svg>
          <span className="absolute bottom-[-2px] left-[7px] rounded-[2px] bg-[#fcc21c] px-[3px] text-[8px] font-extrabold leading-[11px] text-[#26200b]">PRE</span>
        </div>
      </div>
    </div>
  );
}

function RemoteWindow() {
  return (
    <div className="absolute left-[112px] top-[154px] flex h-[1156px] w-[1920px] flex-col overflow-hidden rounded-[20px] bg-[#202123] shadow-[0_28px_70px_rgba(0,0,0,0.5),0_0_2px_rgba(0,0,0,0.7)]">
      <RemoteBar />
      <div className="h-px bg-black" />
      <PhotosHeader />
      <PhotoCanvas />
      <PhotosFooter />
      <Taskbar />
    </div>
  );
}

export default function App() {
  return (
    <div className="relative h-[1476px] w-[2268px] overflow-hidden bg-[#101010] font-['Inter',sans-serif]">
      <Browser />
      <RemoteWindow />
      <div className={`absolute left-[1044px] top-[720px] whitespace-nowrap text-[23.300px] font-bold leading-[36px] text-[#ee4432] ${thai}`}>เลียงเหมือนบริการ</div>
      <Icon w={20} h={26} sw={1.4} className="absolute left-[946px] top-[751px] text-[#14142a]">
        <path
          d="M6 14V4.500q1.500-2 2.500 0V3q1.500-3 3 0v1.500q1.500-2 3 0V7q1.500-2 3 0v9q0 8-6 9-4 0-6-4L1 15.500q0-2.500 3-1L6 17zM8.500 4.500V12M11.500 4v8M14.500 6v6"
          fill="#fff"
        />
      </Icon>
      <Icon w={16} h={25} sw={1.3} className="absolute left-[841px] top-[1133px] text-[#24244a]">
        <path d="M1 1v20l4.500-4 3 7 3-1.500-3-6.500h6z" fill="#aaaafa" />
      </Icon>
      <div className="absolute left-[856px] top-[1157px] font-['Open_Sans'] text-[16px] leading-6 tracking-[-0.01em] text-[#3c3c3c]">jirapat</div>
    </div>
  );
}
